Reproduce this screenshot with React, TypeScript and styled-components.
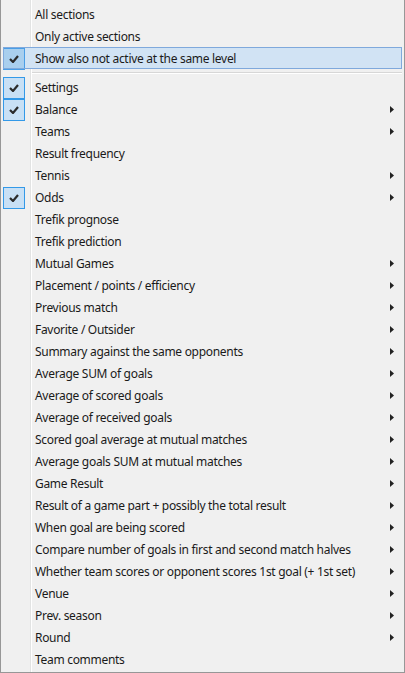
import React from "react";
import styled, { createGlobalStyle } from "styled-components";

const Global = createGlobalStyle`
  html, body { margin: 0; padding: 0; background: #f0f0f0; }
  body { font-family: "Noto Sans", "Open Sans", "Liberation Sans", sans-serif; }
`;

const Menu = styled.div`
  box-sizing: border-box;
  width: 405px;
  height: 673px;
  background-color: #f0f0f0;
  background-image: linear-gradient(
    to right,
    transparent 29px,
    #e2e3e3 29px,
    #e2e3e3 30px,
    #ffffff 30px,
    #ffffff 31px,
    transparent 31px
  );
  border: 1px solid #979797;
  border-top: none;
  padding: 3px 2px 2px 2px;
  display: flex;
  flex-direction: column;
`;

const Row = styled.div<{ $hover?: boolean }>`
  position: relative;
  box-sizing: border-box;
  height: 22px;
  display: grid;
  grid-template-columns: 32px 1fr 12px;
  align-items: center;
  font-size: 12px;
  color: #1a1a1a;
  background: ${(p) => (p.$hover ? "#d1e3f4" : "transparent")};
  outline: ${(p) => (p.$hover ? "1px solid #7fa9dc" : "none")};
  outline-offset: -1px;
`;

const Label = styled.span`
  white-space: nowrap;
  line-height: 22px;
  letter-spacing: -0.3px;
  padding-top: 1px;
`;

const CheckBox = styled.span<{ $hover?: boolean }>`
  box-sizing: border-box;
  width: 22px;
  height: 22px;
  display: flex;
  align-items: center;
  justify-content: center;
  background: ${(p) => (p.$hover ? "#a9cfee" : "#c8e0f5")};
  border: 1px solid ${(p) => (p.$hover ? "#4a9ee6" : "#3399e8")};
`;

const Arrow = styled.span`
  display: flex;
  align-items: center;
`;

const Separator = styled.div`
  height: 7px;
  display: flex;
  align-items: center;
  padding-left: 29px;
  &::after {
    content: "";
    flex: 1;
    height: 1px;
    background: #d7d7d7;
    box-shadow: 0 1px 0 #ffffff;
  }
`;

const Check = () => (
  <svg width="10" height="8" viewBox="0 0 10 8">
    <path d="M1 4 L4 7 L9 1" fill="none" stroke="#2b2b2b" strokeWidth="2.2" />
  </svg>
);

const Tri = () => (
  <svg width="4" height="7" viewBox="0 0 4 7">
    <path d="M0 0 L4 3.5 L0 7 Z" fill="#222" />
  </svg>
);

type Item = { label: string; checked?: boolean; sub?: boolean; hover?: boolean };

const top: Item[] = [
  { label: "All sections" },
  { label: "Only active sections" },
  { label: "Show also not active at the same level", checked: true, hover: true },
];

const items: Item[] = [
  { label: "Settings", checked: true },
  { label: "Balance", checked: true, sub: true },
  { label: "Teams", sub: true },
  { label: "Result frequency" },
  { label: "Tennis", sub: true },
  { label: "Odds", checked: true, sub: true },
  { label: "Trefik prognose" },
  { label: "Trefik prediction" },
  { label: "Mutual Games", sub: true },
  { label: "Placement / points / efficiency", sub: true },
  { label: "Previous match", sub: true },
  { label: "Favorite / Outsider", sub: true },
  { label: "Summary against the same opponents", sub: true },
  { label: "Average SUM of goals", sub: true },
  { label: "Average of scored goals", sub: true },
  { label: "Average of received goals", sub: true },
  { label: "Scored goal average at mutual matches", sub: true },
  { label: "Average goals SUM at mutual matches", sub: true },
  { label: "Game Result", sub: true },
  { label: "Result of a game part + possibly the total result", sub: true },
  { label: "When goal are being scored", sub: true },
  { label: "Compare number of goals in first and second match halves", sub: true },
  { label: "Whether team scores or opponent scores 1st goal (+ 1st set)", sub: true },
  { label: "Venue", sub: true },
  { label: "Prev. season", sub: true },
  { label: "Round", sub: true },
  { label: "Team comments" },
];

const MenuRow = ({ item }: { item: Item }) => (
  <Row $hover={item.hover}>
    <span>
      {item.checked && (
        <CheckBox $hover={item.hover}>
          <Check />
        </CheckBox>
      )}
    </span>
    <Label>{item.label}</Label>
    <Arrow>{item.sub && <Tri />}</Arrow>
  </Row>
);

export default function App() {
  return (
    <>
      <Global />
      <Menu>
        {top.map((it) => (
          <MenuRow key={it.label} item={it} />
        ))}
        <Separator />
        {items.map((it) => (
          <MenuRow key={it.label} item={it} />
        ))}
      </Menu>
    </>
  );
}
